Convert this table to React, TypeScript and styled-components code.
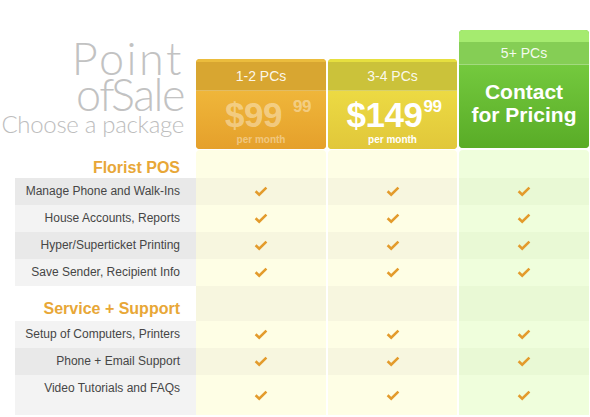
import React from "react"
import styled, { createGlobalStyle } from "styled-components"

type Tone = "orange" | "yellow" | "green"

type Plan = {
  tone: Tone
  name: string
  price?: string
  cents?: string
  faded?: boolean
}

type Feature = {
  label: string
  tall?: boolean
}

type Section = {
  title: string
  features: Feature[]
}

const cardColors = {
  orange: {
    top: "#ebbc3d",
    band: "#d8a631",
    from: "#efb63a",
    to: "#e5a02b",
    edge: "#dfa634",
  },
  yellow: {
    top: "#e6df3f",
    band: "#cbc23a",
    from: "#ecda43",
    to: "#e1c73a",
    edge: "#d6c63a",
  },
  green: {
    top: "#a5eb6f",
    band: "#85ce55",
    from: "#74c93e",
    to: "#59ac27",
    edge: "#6cbd3a",
  },
}

const bodyColors = {
  orange: { light: "#fefee5", dark: "#f7f6df" },
  yellow: { light: "#fefee5", dark: "#f7f6df" },
  green: { light: "#effedc", dark: "#e9f9d5" },
}

const plans: Plan[] = [
  { tone: "orange", name: "1-2 PCs", price: "$99", cents: "99", faded: true },
  { tone: "yellow", name: "3-4 PCs", price: "$149", cents: "99" },
  { tone: "green", name: "5+ PCs" },
]

const widths = [130, 129, 130]

const sections: Section[] = [
  {
    title: "Florist POS",
    features: [
      { label: "Manage Phone and Walk-Ins" },
      { label: "House Accounts, Reports" },
      { label: "Hyper/Superticket Printing" },
      { label: "Save Sender, Recipient Info" },
    ],
  },
  {
    title: "Service + Support",
    features: [
      { label: "Setup of Computers, Printers" },
      { label: "Phone + Email Support" },
      { label: "Video Tutorials and FAQs", tall: true },
    ],
  },
]

const Check = () => (
  <svg width="14" height="11" viewBox="0 0 14 11">
    <path
      d="M1.6 5.2 L5.2 8.6 L12.4 1.6"
      fill="none"
      stroke="#e39b2c"
      strokeWidth="2.6"
      strokeLinejoin="miter"
    />
  </svg>
)

const PlanCard = ({ plan, width }: { plan: Plan; width: number }) => {
  if (plan.tone === "green") {
    return (
      <Card $tone={plan.tone} $w={width} $h={118} $mb={2}>
        <TopStrip $tone={plan.tone} $h={12} />
        <Band $tone={plan.tone} $h={22}>
          {plan.name}
        </Band>
        <PriceArea $tone={plan.tone}>
          <Contact>
            Contact
            <br />
            for Pricing
          </Contact>
        </PriceArea>
      </Card>
    )
  }
  return (
    <Card $tone={plan.tone} $w={width} $h={90} $mb={1}>
      <TopStrip $tone={plan.tone} $h={3} />
      <Band $tone={plan.tone} $h={28}>
        {plan.name}
      </Band>
      <PriceArea $tone={plan.tone}>
        <Price $faded={plan.faded} $shift={plan.faded ? 14 : 3}>
          {plan.price}
          <Cents $gap={plan.faded ? 11 : 1}>{plan.cents}</Cents>
        </Price>
        <PerMonth $faded={plan.faded}>per month</PerMonth>
      </PriceArea>
    </Card>
  )
}

const App = () => {
  return (
    <Page>
      <GlobalStyle />
      <Header>
        <TitleBlock>
          <TitleBig $spacing={2.5}>Point</TitleBig>
          <TitleBig $spacing={-1.5} $tight>
            of Sale
          </TitleBig>
          <TitleSmall>Choose a package</TitleSmall>
        </TitleBlock>
        <Cards>
          {plans.map((p, i) => (
            <PlanCard key={p.name} plan={p} width={widths[i]} />
          ))}
        </Cards>
      </Header>
      {sections.map((section, si) => (
        <React.Fragment key={section.title}>
          <Row $h={si === 0 ? 28 : 35}>
            <HeadingLabel $pb={si === 0 ? 1 : 3}>{section.title}</HeadingLabel>
            <Cells>
              {plans.map((p, i) => (
                <Cell
                  key={p.name}
                  $w={widths[i]}
                  $bg={bodyColors[p.tone][si === 0 ? "light" : "dark"]}
                  $rounded={si === 0}
                />
              ))}
            </Cells>
          </Row>
          {section.features.map((f, fi) => {
            const dark = si === 0 ? fi % 2 === 0 : fi % 2 === 1
            return (
              <Row key={f.label} $h={f.tall ? 40 : 27}>
                <ItemLabel $dark={dark} $top={f.tall}>
                  {f.label}
                </ItemLabel>
                <Cells>
                  {plans.map((p, i) => (
                    <Cell
                      key={p.name}
                      $w={widths[i]}
                      $bg={bodyColors[p.tone][dark ? "dark" : "light"]}
                    >
                      <Check />
                    </Cell>
                  ))}
                </Cells>
              </Row>
            )
          })}
        </React.Fragment>
      ))}
    </Page>
  )
}

export default App

const GlobalStyle = createGlobalStyle`
  html, body {
    margin: 0;
    padding: 0;
    background: #fff;
  }
  body {
    font-family: "Liberation Sans", Arial, sans-serif;
  }
`

const Page = styled.div`
  width: 590px;
  height: 417px;
  overflow: hidden;
  background: #fff;
`

const Header = styled.div`
  display: flex;
  align-items: flex-end;
  height: 150px;
`

const TitleBlock = styled.div`
  width: 196px;
  align-self: stretch;
  box-sizing: border-box;
  padding: 40px 12px 0 0;
  text-align: right;
  font-family: Lato, "Open Sans", sans-serif;
  font-weight: 300;
  color: #c2c2c2;
  white-space: nowrap;
`

const TitleBig = styled.div<{ $tight?: boolean; $spacing: number }>`
  font-size: 45px;
  line-height: 36px;
  letter-spacing: ${p => p.$spacing}px;
  word-spacing: ${p => (p.$tight ? "-12px" : "0")};
`

const TitleSmall = styled.div`
  font-size: 24px;
  line-height: 24px;
  letter-spacing: -0.3px;
  color: #bdbdbd;
`

const Cards = styled.div`
  display: flex;
  align-items: flex-end;
  gap: 2px;
`

const Card = styled.div<{ $tone: Tone; $w: number; $h: number; $mb: number }>`
  width: ${p => p.$w}px;
  height: ${p => p.$h}px;
  margin-bottom: ${p => p.$mb}px;
  display: flex;
  flex-direction: column;
  border-radius: 4px;
  overflow: hidden;
  box-shadow: inset 0 0 0 1px ${p => cardColors[p.$tone].edge};
  color: #fff;
`

const TopStrip = styled.div<{ $tone: Tone; $h: number }>`
  height: ${p => p.$h}px;
  background: ${p => cardColors[p.$tone].top};
`

const Band = styled.div<{ $tone: Tone; $h: number }>`
  height: ${p => p.$h}px;
  display: flex;
  align-items: center;
  justify-content: center;
  background: ${p => cardColors[p.$tone].band};
  border-bottom: 1px solid rgba(255, 255, 255, 0.25);
  font-size: 14px;
  color: rgba(255, 255, 255, 0.92);
`

const PriceArea = styled.div<{ $tone: Tone }>`
  flex: 1;
  display: flex;
  flex-direction: column;
  align-items: center;
  justify-content: center;
  background: linear-gradient(
    ${p => cardColors[p.$tone].from},
    ${p => cardColors[p.$tone].to}
  );
`

const Price = styled.div<{ $faded?: boolean; $shift: number }>`
  display: flex;
  align-items: flex-start;
  margin-top: 2px;
  padding-left: ${p => p.$shift}px;
  font-weight: bold;
  font-size: 35px;
  line-height: 36px;
  letter-spacing: -0.5px;
  color: ${p => (p.$faded ? "rgba(255, 255, 255, 0.4)" : "#fff")};
`

const Cents = styled.span<{ $gap: number }>`
  margin-left: ${p => p.$gap}px;
  font-size: 17px;
  line-height: 20px;
`

const PerMonth = styled.div<{ $faded?: boolean }>`
  margin-top: 1px;
  font-size: 10px;
  font-weight: bold;
  color: ${p => (p.$faded ? "rgba(255, 255, 255, 0.4)" : "#fff")};
`

const Contact = styled.div`
  margin-top: -8px;
  text-align: center;
  font-size: 21px;
  line-height: 23px;
  font-weight: bold;
`

const Row = styled.div<{ $h: number }>`
  display: flex;
  height: ${p => p.$h}px;
`

const HeadingLabel = styled.div<{ $pb: number }>`
  width: 181px;
  margin-left: 15px;
  box-sizing: border-box;
  padding: 0 16px ${p => p.$pb}px 0;
  display: flex;
  align-items: flex-end;
  justify-content: flex-end;
  font-size: 16px;
  line-height: 18px;
  font-weight: bold;
  color: #e8a737;
`

const ItemLabel = styled.div<{ $dark: boolean; $top?: boolean }>`
  width: 181px;
  margin-left: 15px;
  box-sizing: border-box;
  padding: ${p => (p.$top ? "6px 16px 0 0" : "0 16px 0 0")};
  display: flex;
  align-items: ${p => (p.$top ? "flex-start" : "center")};
  justify-content: flex-end;
  background: ${p => (p.$dark ? "#e9e9e9" : "#f3f3f3")};
  font-size: 12px;
  line-height: 15px;
  color: #464646;
  white-space: nowrap;
`

const Cells = styled.div`
  display: flex;
  gap: 2px;
`

const Cell = styled.div<{ $w: number; $bg: string; $rounded?: boolean }>`
  width: ${p => p.$w}px;
  display: flex;
  align-items: center;
  justify-content: center;
  background: ${p => p.$bg};
  border-radius: ${p => (p.$rounded ? "4px 4px 0 0" : "0")};
`
